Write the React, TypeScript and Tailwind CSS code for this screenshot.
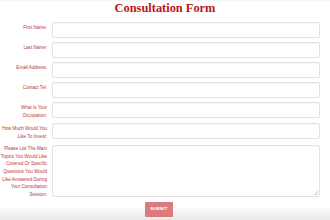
import React from "react";

const rows: { label: string[]; textarea?: boolean }[] = [
  { label: ["First Name:"] },
  { label: ["Last Name:"] },
  { label: ["Email Address:"] },
  { label: ["Contact Tel:"] },
  { label: ["What Is Your", "Occupation:"] },
  { label: ["How Much Would You", "Like To Invest:"] },
  {
    label: [
      "Please List The Main",
      "Topics You Would Like",
      "Covered Or Specific",
      "Questions You Would",
      "Like Answered During",
      "Your Consultation",
      "Session:",
    ],
    textarea: true,
  },
];

export default function App() {
  return (
    <div className="w-[330px] h-[220px] overflow-hidden bg-[linear-gradient(to_bottom,#f3f3f3_0px,#ffffff_2px,#ffffff_206px,#e9e9e9_220px)] font-['Liberation_Sans',Arial,sans-serif]">
      <h1 className="text-center text-[12.4px] leading-[16px] font-bold text-[#c1121b] font-['Liberation_Serif','Times_New_Roman',serif]">
        Consultation Form
      </h1>
      <div className="flex flex-col gap-[4px] mt-[6px]">
        {rows.map((r, i) => (
          <div key={i} className="flex items-start">
            <div className={`w-[48px] shrink-0 pr-[1px] text-right text-[4.6px] leading-[7.7px] text-[#b8383a] ${r.textarea ? "pt-0" : "pt-[2px]"}`}>
              {r.label.map((l, j) => (
                <div key={j} className="whitespace-nowrap">{l}</div>
              ))}
            </div>
            <div className="ml-[4px] w-[268px]">
              {r.textarea ? (
                <div className="relative h-[52px] border border-[#e2e2e2] rounded-[2px] bg-white shadow-[inset_0_1px_1px_rgba(0,0,0,0.03)]">
                  <svg className="absolute right-[1px] bottom-[1px]" width="4" height="4" viewBox="0 0 4 4">
                    <path d="M0 4 L4 0 M2 4 L4 2" stroke="#c9a9a9" strokeWidth="0.7" />
                  </svg>
                </div>
              ) : (
                <div className="h-[16px] border border-[#e2e2e2] rounded-[2px] bg-white shadow-[inset_0_1px_1px_rgba(0,0,0,0.03)]" />
              )}
            </div>
          </div>
        ))}
      </div>
      <div className="flex mt-[3px] pl-[145px]">
        <div className="w-[28px] h-[15px] bg-[#db7b7d] rounded-[1px] flex items-center justify-center text-white font-bold text-[4.2px] tracking-[0.2px]">
          SUBMIT
        </div>
      </div>
    </div>
  );
}
